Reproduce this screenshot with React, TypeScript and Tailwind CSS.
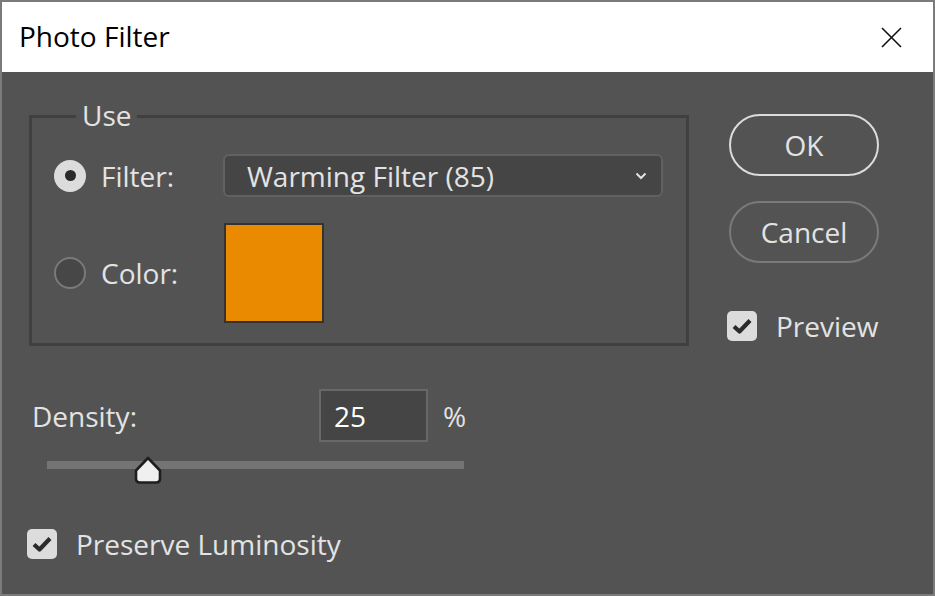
import React from 'react'

const font = { fontFamily: '"Open Sans", "Noto Sans", sans-serif' }

function CheckBox() {
  return (
    <div className='w-[30px] h-[30px] rounded-[5px] bg-[#dcdcdc] flex items-center justify-center'>
      <svg width='22' height='18' viewBox='0 0 22 18'>
        <path d='M3 9.5 L8.5 14.5 L19 3.5' fill='none' stroke='#2b2b2b' strokeWidth='4.2' strokeLinejoin='round' />
      </svg>
    </div>
  )
}

export default function App() {
  return (
    <div style={font} className='w-[935px] h-[596px] border-2 border-[#7b7b7b] flex flex-col overflow-hidden'>
      {/* title bar */}
      <div className='h-[70px] bg-white flex items-center justify-between pl-[17px] pr-[31px] shrink-0'>
        <span className='text-black text-[28px] leading-none -mt-[2px]'>Photo Filter</span>
        <svg width='21' height='21' viewBox='0 0 21 21'>
          <path d='M1 1 L20 20 M20 1 L1 20' stroke='#111' strokeWidth='1.6' />
        </svg>
      </div>

      {/* body */}
      <div className='flex-1 bg-[#535353] flex pl-[27px] pt-[42px] text-[#e3e3e3] text-[28px] leading-none'>
        <div className='w-[660px] flex flex-col'>
          {/* Use group */}
          <div className='relative mt-[1px] h-[231px] border-[3px] border-[#404040] pl-[22px] pt-[36px]'>
            <span className='absolute left-[44px] -top-[18px] bg-[#535353] px-[6px] leading-[30px]'>Use</span>

            <div className='flex items-center h-[43px]'>
              <div className='w-[169px] flex items-center'>
                <div className='w-[32px] h-[32px] rounded-full bg-[#dcdcdc] flex items-center justify-center'>
                  <div className='w-[11px] h-[11px] rounded-full bg-[#2b2b2b]' />
                </div>
                <span className='ml-[15px]'>Filter:</span>
              </div>
              <div className='w-[440px] h-[43px] rounded-[6px] border-2 border-[#616161] bg-[#454545] flex items-center justify-between pl-[22px] pr-[14px]'>
                <span>Warming Filter (85)</span>
                <svg width='12' height='8' viewBox='0 0 12 8'>
                  <path d='M1.5 1.5 L6 6 L10.5 1.5' fill='none' stroke='#e3e3e3' strokeWidth='2' />
                </svg>
              </div>
            </div>

            <div className='flex items-center mt-[26px]'>
              <div className='w-[169px] flex items-center'>
                <div className='w-[32px] h-[32px] rounded-full bg-[#474747] border-2 border-[#7a7a7a]' />
                <span className='ml-[15px]'>Color:</span>
              </div>
              <div className='ml-[1px] w-[100px] h-[100px] border-2 border-[#333333] bg-[#ea8a00]' />
            </div>
          </div>

          {/* Density */}
          <div className='flex items-center mt-[43px] h-[53px]'>
            <span className='w-[290px] pl-[3px]'>Density:</span>
            <div className='w-[109px] h-[53px] border-2 border-[#686868] bg-[#454545] flex items-center pl-[13px]'>
              <span className='text-white'>25</span>
            </div>
            <span className='ml-[15px]'>%</span>
          </div>

          {/* slider */}
          <div className='relative ml-[18px] mt-[14px] w-[417px] h-[27px]'>
            <div className='absolute left-0 right-0 top-[5px] h-[8px] bg-[#747474]' />
            <svg className='absolute left-[86px] top-0' width='30' height='29' viewBox='0 0 30 29'>
              <path d='M15 2 L27 14.5 V22.5 Q27 26.5 23 26.5 H7 Q3 26.5 3 22.5 V14.5 Z' fill='#f0f0f0' stroke='#1e1e1e' strokeWidth='2.6' strokeLinejoin='round' />
            </svg>
          </div>

          {/* preserve luminosity */}
          <div className='flex items-center mt-[46px] -ml-[2px]'>
            <CheckBox />
            <span className='ml-[19px]'>Preserve Luminosity</span>
          </div>
        </div>

        {/* buttons column */}
        <div className='ml-[40px] w-[150px] flex flex-col'>
          <div className='h-[62px] rounded-full border-2 border-[#dcdcdc] flex items-center justify-center'>OK</div>
          <div className='h-[62px] mt-[25px] rounded-full border-2 border-[#7a7a7a] flex items-center justify-center'>Cancel</div>
          <div className='flex items-center mt-[48px] -ml-[2px]'>
            <CheckBox />
            <span className='ml-[19px]'>Preview</span>
          </div>
        </div>
      </div>
    </div>
  )
}
